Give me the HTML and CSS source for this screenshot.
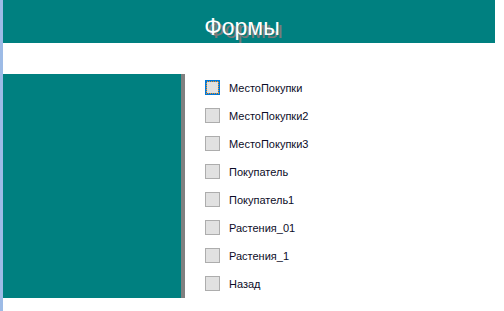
FILE: index.html
```html
<!DOCTYPE html>
<html lang="ru">
<head>
  <meta charset="UTF-8">
  <title>Формы</title>
  <link rel="stylesheet" href="styles.css">
</head>
<body>
  <div class="window">
    <!-- Header -->
    <div class="header">
      <h1>Формы</h1>
    </div>

    <div class="content">
      <div class="side-panel"></div>

      <!-- Form list -->
      <ul class="form-list">
        <li class="form-item focused">
          <span class="box">
            <svg class="focus-ring" width="13" height="13" viewBox="0 0 13 13">
              <rect x="0.5" y="0.5" width="12" height="12" fill="none" stroke="#f7901e" stroke-width="1" stroke-dasharray="1 1" shape-rendering="crispEdges"/>
            </svg>
          </span>МестоПокупки
        </li>
        <li class="form-item"><span class="box"></span>МестоПокупки2</li>
        <li class="form-item"><span class="box"></span>МестоПокупки3</li>
        <li class="form-item"><span class="box"></span>Покупатель</li>
        <li class="form-item"><span class="box"></span>Покупатель1</li>
        <li class="form-item"><span class="box"></span>Растения_01</li>
        <li class="form-item"><span class="box"></span>Растения_1</li>
        <li class="form-item"><span class="box"></span>Назад</li>
      </ul>
    </div>
  </div>
</body>
</html>
```

FILE: styles.css
```css
* {
  margin: 0;
  padding: 0;
  box-sizing: border-box;
}

body {
  background: #fff;
  font-family: "Liberation Sans", Arial, sans-serif;
}

.window {
  height: 311px;
  border-left: 3px solid #9dbbe6;
  padding-right: 9px;
}

/* Header */
.header {
  height: 43px;
  background: #008080;
  display: flex;
  justify-content: center;
  align-items: flex-end;
}

.header h1 {
  font-weight: normal;
  font-size: 23px;
  line-height: 1;
  color: #fff;
  text-shadow: 3px 3px 0 #7a7a7a;
  margin-bottom: 4px;
  margin-left: -14px;
}

.content {
  display: flex;
  margin-top: 31px;
}

.side-panel {
  width: 182px;
  height: 224px;
  background: #008080;
  border-right: 4px solid #808080;
}

/* List of forms */
.form-list {
  list-style: none;
  margin-left: 20px;
  padding-top: 6px;
}

.form-item {
  display: flex;
  align-items: center;
  height: 28px;
  padding-bottom: 13px;
  font-size: 11px;
  color: #0c0c28;
}

.form-item .box {
  position: relative;
  flex-shrink: 0;
  width: 15px;
  height: 15px;
  border: 1px solid #adadad;
  background: #e1e1e1;
  margin-right: 9px;
}

.form-item.focused .box {
  border: 2px solid #0078d7;
}

/* dotted focus rectangle over the inner blue ring */
.focus-ring {
  position: absolute;
  top: -1px;
  left: -1px;
  display: block;
}
```
